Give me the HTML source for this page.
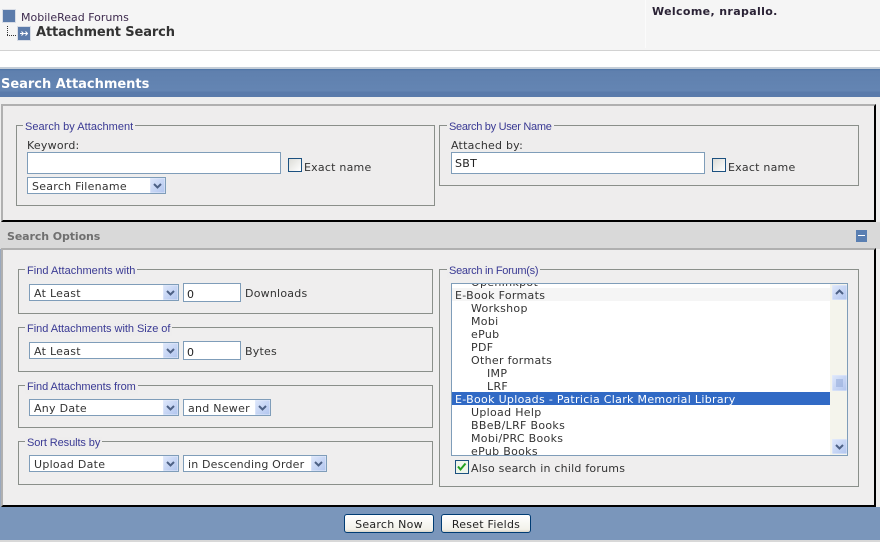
<!DOCTYPE html>
<html><head><meta charset="utf-8"><title>Attachment Search</title>
<style>
html,body{margin:0;padding:0;background:#fff}
#p{position:relative;width:880px;height:554px;overflow:hidden;background:#fff;font:11px "DejaVu Sans",sans-serif;color:#333}
#p div,#p span.t{position:absolute;white-space:nowrap;box-sizing:border-box}
.t{line-height:13px;letter-spacing:.02em}
.fs{border:1px solid #8a8f8a}
.lg{font:11px/13px "Liberation Sans",sans-serif;color:#3a3a94;background:#eeeded;padding:0 2px;margin-top:1px}
.inp{background:#fff;border:1px solid #7f9db9;padding:1px 0 0 3px;line-height:18px;color:#222;letter-spacing:.3px}
.sel{background:#fff;border:1px solid #7f9db9;color:#333;line-height:17px;padding-left:4px;letter-spacing:.27px}
.sel svg{position:absolute;right:0;top:0}
.cb{width:14px;height:14px;background:linear-gradient(135deg,#dcdcd7,#fff);border:1px solid #1c5180}
.btn{height:19px;background:linear-gradient(#fff,#f2f1ea 85%,#d8d4c8);border:1px solid #003c74;border-radius:3px;text-align:center;line-height:19px;color:#222;letter-spacing:.25px}
.o{left:0;width:378px;height:13px;line-height:15px;color:#333;letter-spacing:.31px}
</style></head><body>
<div id="p">
<svg width="0" height="0" style="position:absolute"><defs>
<linearGradient id="g" x1="0" y1="0" x2="1" y2="1"><stop offset="0" stop-color="#dfe8fb"/><stop offset="1" stop-color="#b0c4ee"/></linearGradient>
<symbol id="ar" viewBox="0 0 15 15"><rect width="15" height="15" rx="1" fill="url(#g)" stroke="#e4ebfa"/><path d="M4 6l3.500 3.500L11 6" fill="none" stroke="#4d6185" stroke-width="2"/></symbol>
<symbol id="up" viewBox="0 0 15 15"><rect width="15" height="15" rx="1" fill="url(#g)" stroke="#e4ebfa"/><path d="M4 9l3.500-3.500L11 9" fill="none" stroke="#4d6185" stroke-width="2"/></symbol>
</defs></svg>

<!-- header -->
<div style="left:0;top:0;width:880px;height:50px;background:#f5f5f5"></div>
<div style="left:645px;top:0;width:1px;height:48px;background:#fbfbfb"></div>
<div style="left:0;top:50px;width:880px;height:1px;background:#d2d2d2"></div>
<div style="left:2px;top:9px;width:14px;height:14px;background:#5c7cab;border:1px solid #d8dde6"></div>
<span class="t" style="left:21px;top:11px;color:#3d2a4d;letter-spacing:0">MobileRead Forums</span>
<div style="left:7px;top:26px;width:1px;height:9px;border-left:1px dotted #333"></div>
<div style="left:7px;top:35px;width:9px;height:1px;border-top:1px dotted #333"></div>
<div style="left:17px;top:26px;width:14px;height:15px;background:#5c7cab;border:1px solid #d8dde6"></div>
<svg style="position:absolute;left:20px;top:30px" width="8" height="7"><path d="M0 3.500h3M1.500 1.500l2 2-2 2M4 3.500h3M5.500 1.500l2 2-2 2" fill="none" stroke="#fff"/></svg>
<span class="t" style="left:36px;top:25px;font-size:13px;line-height:15px;font-weight:bold;color:#333;letter-spacing:-.12px">Attachment Search</span>
<span class="t" style="left:652px;top:5px;font-weight:bold;color:#2a2235;letter-spacing:.36px">Welcome, nrapallo.</span>

<!-- blue band -->
<div style="left:0;top:67px;width:880px;height:2px;background:#c5ced8"></div>
<div style="left:0;top:69px;width:880px;height:28px;background:linear-gradient(#4e74a6 0,#5f80ae 2px,#6485b3 22px,#5a7bab 23px,#5a7bab 100%)"></div>
<span class="t" style="left:1px;top:77px;font-size:13px;line-height:15px;font-weight:bold;color:#fff;letter-spacing:-.02px">Search Attachments</span>
<div style="left:0;top:97px;width:880px;height:125px;background:#eeeeee"></div>

<!-- panel 1 -->
<div style="left:1px;top:104px;width:875px;height:118px;background:#eeeded;border:2px solid #b0b0b0;border-right-color:#000;border-bottom-color:#000"></div>
<div class="fs" style="left:16px;top:125px;width:419px;height:81px"></div>
<span class="t lg" style="left:23px;top:120px;letter-spacing:.03px">Search by Attachment</span>
<span class="t" style="left:27px;top:139px">Keyword:</span>
<div class="inp" style="left:27px;top:152px;width:254px;height:22px"></div>
<div class="cb" style="left:288px;top:158px"></div>
<span class="t" style="left:304px;top:161px">Exact name</span>
<div class="sel" style="left:27px;top:177px;width:139px;height:17px">Search Filename<svg width="15" height="15"><use href="#ar"/></svg></div>

<div class="fs" style="left:439px;top:125px;width:420px;height:61px"></div>
<span class="t lg" style="left:447px;top:120px;letter-spacing:-.3px">Search by User Name</span>
<span class="t" style="left:451px;top:139px">Attached by:</span>
<div class="inp" style="left:451px;top:152px;width:254px;height:22px;padding-top:0;line-height:21px">SBT</div>
<div class="cb" style="left:712px;top:158px"></div>
<span class="t" style="left:728px;top:161px">Exact name</span>

<!-- options bar -->
<div style="left:0;top:222px;width:880px;height:27px;background:#d9d9d9"></div>
<span class="t" style="left:7px;top:230px;font-weight:bold;color:#6f6f6f;font-size:11px;letter-spacing:-.1px">Search Options</span>
<div style="left:856px;top:230px;width:11px;height:12px;background:#5a7fb2"></div>
<div style="left:858px;top:235px;width:7px;height:1px;background:#fff"></div>

<!-- options panel -->
<div style="left:0;top:249px;width:880px;height:258px;background:#eeeeee"></div>
<div style="left:0;top:249px;width:2px;height:258px;background:#9aa8bd"></div>
<div style="left:1px;top:248px;width:875px;height:259px;background:#efeeee;border:2px solid #b0b0b0;border-right-color:#000;border-bottom-color:#000"></div>

<div class="fs" style="left:18px;top:269px;width:415px;height:45px"></div>
<span class="t lg" style="left:25px;top:264px;letter-spacing:.04px">Find Attachments with</span>
<div class="sel" style="left:29px;top:284px;width:150px;height:17px">At Least<svg width="15" height="15"><use href="#ar"/></svg></div>
<div class="inp" style="left:183px;top:283px;width:58px;height:19px;line-height:19px">0</div>
<span class="t" style="left:245px;top:287px">Downloads</span>

<div class="fs" style="left:18px;top:327px;width:415px;height:45px"></div>
<span class="t lg" style="left:25px;top:322px;letter-spacing:-.03px">Find Attachments with Size of</span>
<div class="sel" style="left:29px;top:342px;width:150px;height:17px">At Least<svg width="15" height="15"><use href="#ar"/></svg></div>
<div class="inp" style="left:183px;top:341px;width:58px;height:19px;line-height:19px">0</div>
<span class="t" style="left:245px;top:345px">Bytes</span>

<div class="fs" style="left:18px;top:385px;width:415px;height:43px"></div>
<span class="t lg" style="left:25px;top:380px;letter-spacing:-.06px">Find Attachments from</span>
<div class="sel" style="left:29px;top:399px;width:150px;height:17px">Any Date<svg width="15" height="15"><use href="#ar"/></svg></div>
<div class="sel" style="left:183px;top:399px;width:88px;height:17px">and Newer<svg width="15" height="15"><use href="#ar"/></svg></div>

<div class="fs" style="left:18px;top:441px;width:415px;height:44px"></div>
<span class="t lg" style="left:25px;top:436px;letter-spacing:-.09px">Sort Results by</span>
<div class="sel" style="left:29px;top:455px;width:150px;height:17px">Upload Date<svg width="15" height="15"><use href="#ar"/></svg></div>
<div class="sel" style="left:183px;top:455px;width:144px;height:17px;letter-spacing:.17px">in Descending Order<svg width="15" height="15"><use href="#ar"/></svg></div>

<div class="fs" style="left:439px;top:269px;width:420px;height:218px"></div>
<span class="t lg" style="left:447px;top:264px;letter-spacing:-.27px">Search in Forum(s)</span>

<!-- listbox -->
<div style="left:451px;top:283px;width:397px;height:173px;background:#fff;border:1px solid #7f9db9;overflow:hidden">
 <div class="o" style="top:-9px;padding-left:19px">OpenInkpot</div>
 <div class="o" style="top:4px;background:#f5f5f5;padding-left:3px">E-Book Formats</div>
 <div class="o" style="top:17px;padding-left:19px">Workshop</div>
 <div class="o" style="top:30px;padding-left:19px">Mobi</div>
 <div class="o" style="top:43px;padding-left:19px">ePub</div>
 <div class="o" style="top:56px;padding-left:19px">PDF</div>
 <div class="o" style="top:69px;padding-left:19px">Other formats</div>
 <div class="o" style="top:82px;padding-left:35px">IMP</div>
 <div class="o" style="top:95px;padding-left:35px">LRF</div>
 <div class="o" style="top:108px;background:#316ac5;color:#fff;padding-left:3px">E-Book Uploads - Patricia Clark Memorial Library</div>
 <div class="o" style="top:121px;padding-left:19px">Upload Help</div>
 <div class="o" style="top:134px;padding-left:19px">BBeB/LRF Books</div>
 <div class="o" style="top:147px;padding-left:19px">Mobi/PRC Books</div>
 <div class="o" style="top:160px;padding-left:19px">ePub Books</div>
 <div style="left:378px;top:0;width:17px;height:171px;background:#f4f4ec"></div>
</div>
<svg style="position:absolute;left:832px;top:285px" width="15" height="15"><use href="#up"/></svg>
<svg style="position:absolute;left:832px;top:439px" width="15" height="15"><use href="#ar"/></svg>
<svg style="position:absolute;left:832px;top:375px" width="15" height="16"><rect width="15" height="16" rx="1" fill="url(#g)" stroke="#e4ebfa"/><path d="M4 5h7M4 7h7M4 9h7M4 11h7" stroke="#8ea6d6"/></svg>

<div class="cb" style="left:455px;top:460px;background:#eef5ea"></div>
<svg style="position:absolute;left:457px;top:462px" width="10" height="10"><path d="M1 4.500l2.500 3L8.500 1.500" fill="none" stroke="#21a121" stroke-width="2"/></svg>
<span class="t" style="left:471px;top:462px">Also search in child forums</span>

<!-- footer -->
<div style="left:0;top:507px;width:880px;height:33px;background:#7a96bb"></div>
<div style="left:0;top:540px;width:880px;height:2px;background:#d8d8d8"></div>
<div class="btn" style="left:344px;top:514px;width:90px">Search Now</div>
<div class="btn" style="left:441px;top:514px;width:90px">Reset Fields</div>
</div>
</body></html>
